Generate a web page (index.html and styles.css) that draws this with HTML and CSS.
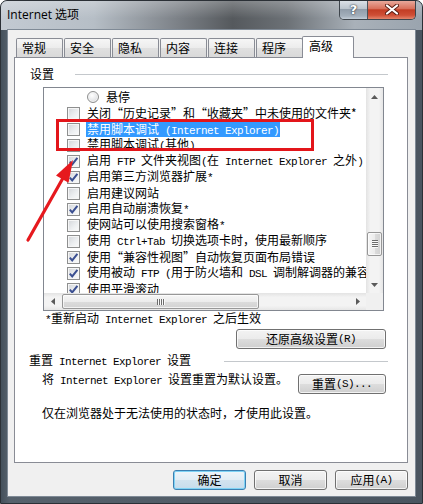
FILE: index.html
```html
<!DOCTYPE html>
<html lang="zh-CN">
<head>
<meta charset="utf-8">
<title>Internet 选项</title>
<link rel="stylesheet" href="styles.css">
</head>
<body>
<div class="window">
  <div class="titlebar">
    <div class="title">Internet 选项</div>
    <div class="caption">
      <div class="cap-help">?</div>
      <div class="cap-close">
        <svg width="14" height="11" viewBox="0 0 14 11"><path d="M2 1.5 L12 9.5 M12 1.5 L2 9.5" stroke="#5a1e14" stroke-width="4" stroke-linecap="round"/><path d="M2 1.5 L12 9.5 M12 1.5 L2 9.5" stroke="#ffffff" stroke-width="2.2" stroke-linecap="round"/></svg>
      </div>
    </div>
  </div>
  <div class="client">
    <div class="tabs">
      <div class="tab">常规</div>
      <div class="tab">安全</div>
      <div class="tab">隐私</div>
      <div class="tab">内容</div>
      <div class="tab">连接</div>
      <div class="tab">程序</div>
      <div class="tab active">高级</div>
    </div>
    <div class="panel">
      <div class="group-head"><span>设置</span><i class="rule r1"></i></div>
      <div class="listbox">
        <div class="list">
          <div class="row sub"><span class="radio"></span><span class="t">悬停</span></div>
          <div class="row"><span class="cb"></span><span class="t">关闭“历史记录”和“收藏夹”中未使用的文件夹*</span></div>
          <div class="row"><span class="cb"></span><span class="sel">禁用脚本调试<span class="m"> (Internet Explorer)</span></span></div>
          <div class="row"><span class="cb"></span><span class="t">禁用脚本调试<span class="m">(</span>其他<span class="m">)</span></span></div>
          <div class="row"><span class="cb on"><svg width="11" height="11" viewBox="0 0 11 11"><path d="M1.8 5.6 L4.2 8.4 L9.4 1.8" fill="none" stroke="#3b4f91" stroke-width="2"/></svg></span><span class="t">启用<span class="m"> FTP </span>文件夹视图<span class="m">(</span>在<span class="m"> Internet Explorer </span>之外<span class="m">)</span></span></div>
          <div class="row"><span class="cb on"><svg width="11" height="11" viewBox="0 0 11 11"><path d="M1.8 5.6 L4.2 8.4 L9.4 1.8" fill="none" stroke="#3b4f91" stroke-width="2"/></svg></span><span class="t">启用第三方浏览器扩展<span class="m">*</span></span></div>
          <div class="row"><span class="cb"></span><span class="t">启用建议网站</span></div>
          <div class="row"><span class="cb on"><svg width="11" height="11" viewBox="0 0 11 11"><path d="M1.8 5.6 L4.2 8.4 L9.4 1.8" fill="none" stroke="#3b4f91" stroke-width="2"/></svg></span><span class="t">启用自动崩溃恢复<span class="m">*</span></span></div>
          <div class="row"><span class="cb"></span><span class="t">使网站可以使用搜索窗格<span class="m">*</span></span></div>
          <div class="row"><span class="cb"></span><span class="t">使用<span class="m"> Ctrl+Tab </span>切换选项卡时，使用最新顺序</span></div>
          <div class="row"><span class="cb on"><svg width="11" height="11" viewBox="0 0 11 11"><path d="M1.8 5.6 L4.2 8.4 L9.4 1.8" fill="none" stroke="#3b4f91" stroke-width="2"/></svg></span><span class="t">使用“兼容性视图”自动恢复页面布局错误</span></div>
          <div class="row"><span class="cb on"><svg width="11" height="11" viewBox="0 0 11 11"><path d="M1.8 5.6 L4.2 8.4 L9.4 1.8" fill="none" stroke="#3b4f91" stroke-width="2"/></svg></span><span class="t">使用被动<span class="m"> FTP (</span>用于防火墙和<span class="m"> DSL </span>调制解调器的兼容性<span class="m">)</span></span></div>
          <div class="row"><span class="cb on"><svg width="11" height="11" viewBox="0 0 11 11"><path d="M1.8 5.6 L4.2 8.4 L9.4 1.8" fill="none" stroke="#3b4f91" stroke-width="2"/></svg></span><span class="t">使用平滑滚动</span></div>
        </div>
        <div class="vscroll">
          <div class="sb-btn"><svg width="7" height="4" viewBox="0 0 7 4"><path d="M3.5 0 L7 4 L0 4 Z" fill="#5a5a5a"/></svg></div>
          <div class="vtrack"><div class="vthumb"><i class="grip-h"></i></div></div>
          <div class="sb-btn"><svg width="7" height="4" viewBox="0 0 7 4"><path d="M0 0 L7 0 L3.5 4 Z" fill="#5a5a5a"/></svg></div>
        </div>
        <div class="hscroll">
          <div class="sb-btn"><svg width="4" height="7" viewBox="0 0 4 7"><path d="M0 3.5 L4 0 L4 7 Z" fill="#5a5a5a"/></svg></div>
          <div class="htrack"><div class="hthumb"><i class="grip-v"></i></div></div>
          <div class="sb-btn"><svg width="4" height="7" viewBox="0 0 4 7"><path d="M0 0 L4 3.5 L0 7 Z" fill="#5a5a5a"/></svg></div>
        </div>
        <div class="corner"></div>
      </div>
      <div class="note"><span class="m">*</span>重新启动<span class="m"> Internet Explorer </span>之后生效</div>
      <div class="btn-row"><div class="btn wide">还原高级设置<span class="m">(R)</span></div></div>
      <div class="group-head second"><span>重置<span class="m"> Internet Explorer </span>设置</span><i class="rule r2"></i></div>
      <div class="reset-row">
        <div class="reset-text">将<span class="m"> Internet Explorer </span>设置重置为默认设置。</div>
        <div class="btn reset">重置<span class="m">(S)...</span></div>
      </div>
      <div class="hint">仅在浏览器处于无法使用的状态时，才使用此设置。</div>
    </div>
    <div class="footer">
      <div class="btn dlg default">确定</div>
      <div class="btn dlg">取消</div>
      <div class="btn dlg">应用<span class="m">(A)</span></div>
    </div>
  </div>
</div>
<div class="annot-box"></div>
<svg class="annot-arrow" width="423" height="504" viewBox="0 0 423 504">
  <path d="M28 240 L63 178" stroke="#e6191e" stroke-width="3.2" stroke-linecap="round"/>
  <path d="M73 160 L56 175.5 L68.5 182.8 Z" fill="#e6191e"/>
</svg>
</body>
</html>
```

FILE: styles.css
```css
* { box-sizing: border-box; margin: 0; padding: 0; }
html, body { width: 423px; height: 504px; overflow: hidden; }
body {
  font-family: "Noto Sans CJK SC", sans-serif;
  font-size: 12px;
  color: #000;
  background: #fff;
}
.m {
  font-family: "Liberation Mono", "Noto Sans CJK SC", monospace;
  font-size: 11px;
  letter-spacing: -0.6px;
  white-space: pre;
}
.t { white-space: nowrap; }

/* window frame */
.window {
  width: 423px;
  height: 504px;
  border: 1px solid #2b3036;
  border-radius: 7px 7px 0 0;
  background: linear-gradient(90deg, #44505b 0%, #56616c 2%, #4a5560 100%);
  display: flex;
  flex-direction: column;
  overflow: hidden;
}
.titlebar {
  height: 29px;
  display: flex;
  align-items: flex-start;
  background:
    linear-gradient(180deg, rgba(255,255,255,0.25) 0%, rgba(255,255,255,0) 60%),
    linear-gradient(90deg, #c3cad2 0%, #b6bec6 22%, #7c8187 42%, #55595d 55%, #6c7176 68%, #a9b1b9 84%, #9aa4ae 100%);
}
.title {
  font-family: "Open Sans", "Noto Sans CJK SC", sans-serif;
  font-size: 12px;
  line-height: 28px;
  padding-left: 6px;
  flex: 1;
  color: #000;
}
.caption {
  display: flex;
  height: 20px;
  margin-top: -1px;
  margin-right: 6px;
  border: 1px solid #3e454c;
  border-top: 0;
  border-radius: 0 0 5px 5px;
  overflow: hidden;
}
.cap-help {
  width: 28px;
  display: flex;
  align-items: center;
  justify-content: center;
  border-right: 1px solid #4a525a;
  background: linear-gradient(180deg, #dfe4ea 0%, #bcc5ce 45%, #919daa 50%, #a4b0bc 85%, #c4ced8 100%);
  color: #fff;
  font-family: "DejaVu Sans", sans-serif;
  font-weight: bold;
  font-size: 13px;
  text-shadow: 0 0 2px #2c3540, 0 0 1px #2c3540;
}
.cap-close {
  width: 47px;
  display: flex;
  align-items: center;
  justify-content: center;
  background: linear-gradient(180deg, #eab0a3 0%, #d9715c 45%, #c33d24 52%, #cf4f36 80%, #e4866c 100%);
}

/* client */
.client {
  margin: 0 7px;
  height: 466px;
  background: #f0f0f0;
  padding: 6px 7px 0 6px;
  display: flex;
  flex-direction: column;
  box-shadow: 0 0 0 1px #7f8a96;
}
.tabs {
  display: flex;
  align-items: flex-end;
  height: 21px;
  padding-left: 2px;
}
.tab {
  width: 47px;
  height: 19px;
  margin-right: 1px;
  border: 1px solid #898c95;
  border-bottom: 0;
  border-radius: 2px 2px 0 0;
  background: linear-gradient(180deg, #f6f6f6 0%, #ececec 50%, #e0e0e0 51%, #d9d9d9 100%);
  padding-left: 5px;
  line-height: 18px;
}
.tab.active {
  width: 52px;
  height: 22px;
  margin-left: -2px;
  margin-bottom: -1px;
  background: #fff;
  position: relative;
  z-index: 1;
  padding-left: 6px;
  line-height: 17px;
}
.panel {
  width: 394px;
  height: 406px;
  background: #fff;
  border: 1px solid #898c95;
  padding: 8px 19px 0 15px;
  display: flex;
  flex-direction: column;
}
.group-head {
  display: flex;
  align-items: center;
  height: 16px;
  line-height: 16px;
  white-space: nowrap;
}
.rule {
  flex: 1;
  height: 1px;
  background: #c4c8cc;
}
.r1 { margin-left: 21px; }
.group-head.second { margin-top: 4px; margin-left: -1px; }
.r2 { margin-left: 33px; }

/* list box */
.listbox {
  margin-top: 5px;
  margin-left: 13px;
  width: 341px;
  height: 224px;
  border: 1px solid #828790;
  display: grid;
  grid-template-columns: 322px 17px;
  grid-template-rows: 205px 17px;
  background: #fff;
}
.list {
  overflow: hidden;
  padding-top: 1px;
  white-space: nowrap;
}
.row {
  height: 16px;
  line-height: 16px;
  display: flex;
  align-items: center;
  padding-left: 23px;
}
.row.sub { padding-left: 43px; }
.cb {
  flex: none;
  width: 13px;
  height: 13px;
  margin-right: 7px;
  border: 1px solid #8e8f8f;
  background: linear-gradient(135deg, #d2d5d9 0%, #eceef0 55%, #fbfbfb 100%);
  box-shadow: inset 0 0 0 1px #f6f6f6;
  display: flex;
  align-items: center;
  justify-content: center;
}
.radio {
  flex: none;
  width: 12px;
  height: 12px;
  margin-right: 7px;
  border-radius: 50%;
  border: 1px solid #8e8f8f;
  background: radial-gradient(circle at 40% 35%, #ffffff 0%, #e6e7e9 55%, #c9ccd0 100%);
  box-shadow: inset 0 0 0 1px #f4f4f4;
}
.sel {
  display: inline-block;
  height: 16px;
  line-height: 16px;
  margin-left: -1px;
  padding: 0 1px;
  background: #3399ff;
  color: #fff;
  white-space: nowrap;
}

/* scrollbars */
.vscroll {
  display: flex;
  flex-direction: column;
  background: linear-gradient(90deg, #e3e3e3 0%, #f3f3f3 25%, #f3f3f3 75%, #e6e6e6 100%);
}
.sb-btn {
  flex: none;
  width: 17px;
  height: 17px;
  display: flex;
  align-items: center;
  justify-content: center;
}
.vtrack { flex: 1; }
.vthumb {
  width: 15px;
  height: 24px;
  margin: 127px 0 0 1px;
  border: 1px solid #979797;
  border-radius: 2px;
  background: linear-gradient(90deg, #f6f6f6 0%, #ececec 50%, #dcdcdc 51%, #d2d2d2 100%);
  box-shadow: inset 0 0 0 1px rgba(255,255,255,0.7);
  display: flex;
  align-items: center;
  justify-content: center;
}
.grip-h {
  width: 6px;
  height: 8px;
  background: repeating-linear-gradient(180deg, #6c6c6c 0 1px, #fafafa 1px 2px);
}
.hscroll {
  display: flex;
  background: linear-gradient(180deg, #e3e3e3 0%, #f3f3f3 25%, #f3f3f3 75%, #e6e6e6 100%);
}
.htrack { flex: 1; }
.hthumb {
  width: 197px;
  height: 15px;
  margin: 1px 0 0 1px;
  border: 1px solid #979797;
  border-radius: 2px;
  background: linear-gradient(180deg, #f6f6f6 0%, #ececec 50%, #dcdcdc 51%, #d2d2d2 100%);
  box-shadow: inset 0 0 0 1px rgba(255,255,255,0.7);
  display: flex;
  align-items: center;
  justify-content: center;
}
.grip-v {
  width: 8px;
  height: 6px;
  background: repeating-linear-gradient(90deg, #6c6c6c 0 1px, #fafafa 1px 2px);
}
.corner { background: #f0f0f0; }

/* text rows */
.note {
  margin-left: 15px;
  height: 14px;
  line-height: 14px;
  white-space: nowrap;
}
.btn-row {
  display: flex;
  justify-content: flex-end;
  margin-top: 4px;
  padding-right: 2px;
}
.btn {
  height: 20px;
  border: 1px solid #707070;
  border-radius: 3px;
  background: linear-gradient(180deg, #f3f3f3 0%, #ebebeb 50%, #dddddd 51%, #cfcfcf 100%);
  box-shadow: inset 0 0 0 1px rgba(255,255,255,0.75);
  display: flex;
  align-items: center;
  justify-content: center;
  line-height: 16px;
  white-space: nowrap;
}
.btn.wide { width: 150px; }
.reset-row {
  display: flex;
  align-items: flex-start;
  margin-top: 2px;
}
.reset-text {
  margin-left: 12px;
  line-height: 16px;
  white-space: nowrap;
}
.btn.reset {
  width: 88px;
  margin-top: 3px;
  margin-left: auto;
  margin-right: 2px;
}
.hint {
  margin-top: 11px;
  margin-left: 12px;
  line-height: 16px;
  white-space: nowrap;
}
.footer {
  display: flex;
  justify-content: flex-end;
  gap: 8px;
  margin-top: 7px;
}
.btn.dlg { width: 73px; }
.btn.default {
  border-color: #3c7fb1;
  background: linear-gradient(180deg, #eef5fa 0%, #e2edf5 50%, #d2e3ef 51%, #c6dcec 100%);
  box-shadow: inset 0 0 0 1px #7fd3f5;
}

/* annotations drawn over the dialog */
.annot-box {
  position: absolute;
  left: 56px;
  top: 119px;
  width: 258px;
  height: 32px;
  border: 3px solid #e3151a;
}
.annot-arrow {
  position: absolute;
  left: 0;
  top: 0;
  pointer-events: none;
}
```
